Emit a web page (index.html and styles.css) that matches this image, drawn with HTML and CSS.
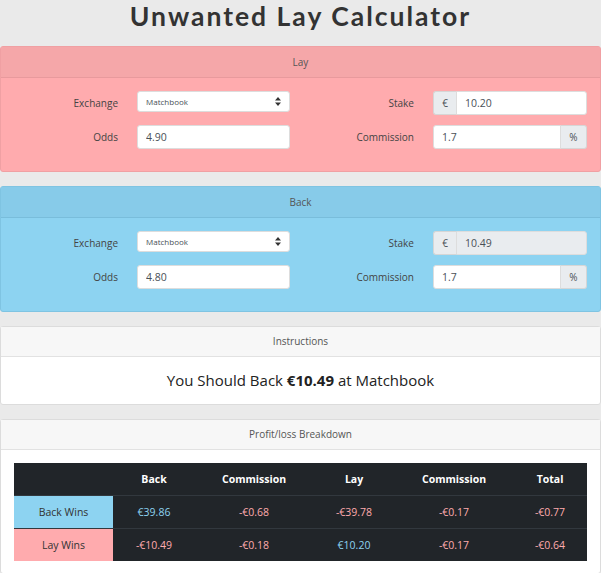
FILE: index.html
```html
<!DOCTYPE html>
<html lang="en">
<head>
  <meta charset="UTF-8">
  <meta name="viewport" content="width=device-width, initial-scale=1.0">
  <title>Unwanted Lay Calculator</title>
  <link rel="stylesheet" href="styles.css">
</head>
<body>

<h1 class="title">Unwanted Lay Calculator</h1>

<div class="card card-lay">
  <div class="card-header">Lay</div>
  <div class="card-body form-grid">
    <label>Exchange</label>
    <div class="select">
      <span>Matchbook</span>
      <svg width="6" height="9" viewBox="0 0 6 9"><path d="M3 0 L6 3.5 H0 Z M3 9 L6 5.5 H0 Z" fill="#333"/></svg>
    </div>
    <label>Stake</label>
    <div class="input-group">
      <span class="addon addon-left">€</span>
      <input type="text" value="10.20">
    </div>
    <label>Odds</label>
    <input type="text" class="input" value="4.90">
    <label>Commission</label>
    <div class="input-group">
      <input type="text" value="1.7">
      <span class="addon addon-right">%</span>
    </div>
  </div>
</div>

<div class="card card-back">
  <div class="card-header">Back</div>
  <div class="card-body form-grid">
    <label>Exchange</label>
    <div class="select">
      <span>Matchbook</span>
      <svg width="6" height="9" viewBox="0 0 6 9"><path d="M3 0 L6 3.5 H0 Z M3 9 L6 5.5 H0 Z" fill="#333"/></svg>
    </div>
    <label>Stake</label>
    <div class="input-group disabled">
      <span class="addon addon-left">€</span>
      <input type="text" value="10.49" disabled>
    </div>
    <label>Odds</label>
    <input type="text" class="input" value="4.80">
    <label>Commission</label>
    <div class="input-group">
      <input type="text" value="1.7">
      <span class="addon addon-right">%</span>
    </div>
  </div>
</div>

<div class="card">
  <div class="card-header">Instructions</div>
  <div class="card-body instructions">
    You Should Back <b>€10.49</b> at Matchbook
  </div>
</div>

<div class="card">
  <div class="card-header">Profit/loss Breakdown</div>
  <div class="card-body breakdown">
    <table class="table-dark">
      <thead>
        <tr>
          <th class="col-name"></th>
          <th class="col-a">Back</th>
          <th class="col-b">Commission</th>
          <th class="col-a">Lay</th>
          <th class="col-b">Commission</th>
          <th>Total</th>
        </tr>
      </thead>
      <tbody>
        <tr>
          <td class="name back-wins">Back Wins</td>
          <td class="pos">€39.86</td>
          <td class="neg">-€0.68</td>
          <td class="neg">-€39.78</td>
          <td class="neg">-€0.17</td>
          <td class="neg">-€0.77</td>
        </tr>
        <tr>
          <td class="name lay-wins">Lay Wins</td>
          <td class="neg">-€10.49</td>
          <td class="neg">-€0.18</td>
          <td class="pos">€10.20</td>
          <td class="neg">-€0.17</td>
          <td class="neg">-€0.64</td>
        </tr>
      </tbody>
    </table>
  </div>
</div>

</body>
</html>
```

FILE: styles.css
```css
body {
  margin: 0;
  font-family: "Open Sans", Arial, sans-serif;
  background-color: #eaeaea;
  color: #212529;
}

.title {
  margin: 0 0 14px;
  font-family: Lato, "Open Sans", sans-serif;
  font-size: 26.5px;
  line-height: 32px;
  font-weight: 700;
  letter-spacing: 2px;
  text-align: center;
  color: #333;
}

.card {
  margin-bottom: 14px;
  background-color: #fff;
  border: 1px solid #dcdcdc;
  border-radius: 3px;
}

.card-header {
  height: 29px;
  line-height: 29px;
  text-align: center;
  font-size: 10px;
  color: #555;
  background-color: #f7f7f7;
  border-bottom: 1px solid #e2e2e2;
}

.card-lay {
  background-color: #ffabae;
  border-color: #f0a0a3;
}

.card-lay .card-header {
  height: 30px;
  line-height: 30px;
  background-color: #f5a7a9;
  border-bottom-color: #e89a9d;
}

.card-back {
  background-color: #8dd3f1;
  border-color: #7fc4e2;
}

.card-back .card-header {
  height: 30px;
  line-height: 30px;
  background-color: #87cbe9;
  border-bottom-color: #79bddb;
}

.form-grid {
  display: grid;
  grid-template-columns: 117px 153px 105px 154px;
  grid-template-rows: 24px 24px;
  column-gap: 19px;
  row-gap: 10px;
  padding: 13px 13px 22px 0;
  align-items: center;
}

.form-grid label {
  text-align: right;
  font-size: 10px;
  color: #444;
}

.select {
  align-self: start;
  height: 19px;
  display: flex;
  align-items: center;
  justify-content: space-between;
  padding: 0 8px;
  background-color: #fff;
  border: 1px solid #ddd;
  border-radius: 3px;
  font-size: 8px;
  color: #495057;
}

.input,
.input-group input {
  height: 24px;
  box-sizing: border-box;
  padding: 0 8px;
  font-family: inherit;
  font-size: 10.5px;
  color: #495057;
  background-color: #fff;
  border: 1px solid #ddd;
  border-radius: 3px;
  outline: none;
}

.input {
  width: 100%;
}

.input-group {
  display: flex;
  height: 24px;
}

.input-group input {
  flex: 1;
  min-width: 0;
}

.addon {
  display: flex;
  align-items: center;
  justify-content: center;
  font-size: 10px;
  color: #495057;
  background-color: #e9ecef;
  border: 1px solid #d6d6d6;
}

.addon-left {
  width: 22px;
  border-radius: 3px 0 0 3px;
  border-right: none;
}

.addon-left + input {
  border-radius: 0 3px 3px 0;
}

.addon-right {
  width: 25px;
  border-radius: 0 3px 3px 0;
  border-left: none;
}

.input-group input:first-child {
  border-radius: 3px 0 0 3px;
}

.disabled input {
  background-color: #e9ecef;
}

.instructions {
  height: 47px;
  line-height: 47px;
  text-align: center;
  font-size: 15px;
  color: #222;
}

.instructions b {
  font-weight: 700;
}

.breakdown {
  padding: 13px 13px 12px 13px;
}

.table-dark {
  width: 100%;
  border-collapse: collapse;
  background-color: #212529;
  color: #fff;
  font-size: 10.5px;
}

.table-dark th,
.table-dark td {
  height: 32px;
  padding: 0;
  text-align: center;
  border-top: 1px solid #32383e;
}

.table-dark th {
  font-weight: 700;
  border-top: none;
}

.col-name {
  width: 99px;
}

.col-a {
  width: 82px;
}

.col-b {
  width: 118px;
}

.name {
  color: #333;
}

.back-wins {
  background-color: #8dd3f1;
}

.lay-wins {
  background-color: #ffabae;
}

.pos {
  color: #8dd3f1;
}

.neg {
  color: #ffabae;
}
```
